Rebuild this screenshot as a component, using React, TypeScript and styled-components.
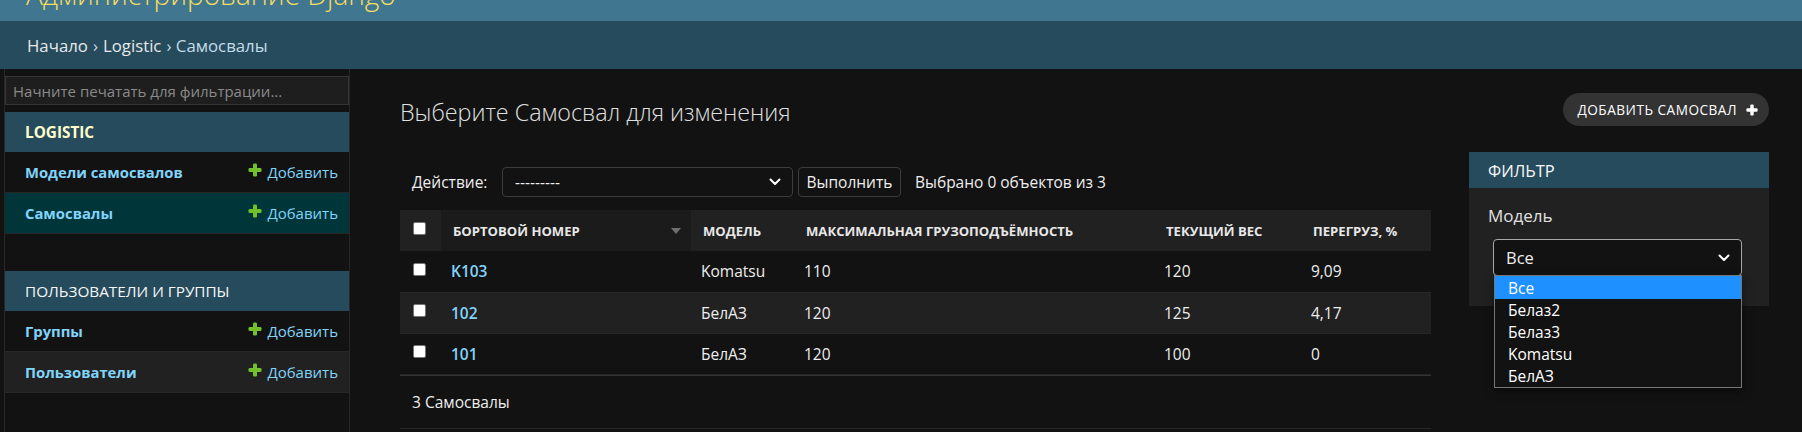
import styled, { createGlobalStyle } from 'styled-components';

const GlobalStyle = createGlobalStyle`
  html, body {
    margin: 0;
    padding: 0;
    background: #121212;
  }
  body {
    font-family: 'Open Sans', 'Noto Sans', sans-serif;
    color: #eeeeee;
  }
  * {
    box-sizing: border-box;
  }
`;

const Page = styled.div`
  width: 1802px;
  height: 432px;
  overflow: hidden;
  display: flex;
  flex-direction: column;
  background: #121212;
`;

/* header is scrolled, only the lower strip is visible */
const Branding = styled.header`
  flex: none;
  height: 21px;
  padding-left: 26px;
  background: #417690;
  overflow: hidden;
`;

const BrandTitle = styled.h1`
  margin: -24px 0 0;
  font-size: 28px;
  font-weight: 300;
  line-height: 36px;
  color: #f5dd5d;
  white-space: nowrap;
`;

const Breadcrumbs = styled.nav`
  flex: none;
  height: 48px;
  padding-left: 27px;
  display: flex;
  align-items: center;
  gap: 5px;
  background: #264b5d;
  font-size: 16.8px;
  color: #c4dce8;
`;

const Crumb = styled.a`
  color: #e8e8e8;
  text-decoration: none;
`;

const Main = styled.div`
  flex: 1;
  display: flex;
  min-height: 0;
`;

const ToggleStrip = styled.div`
  flex: none;
  width: 5px;
  border-right: 1px solid #272727;
`;

const Sidebar = styled.aside`
  flex: none;
  width: 345px;
  padding-top: 7px;
  border-right: 1px solid #272727;
`;

const NavFilter = styled.input`
  display: block;
  width: 344px;
  height: 29px;
  margin: 0 0 7px;
  padding: 0 7px;
  border: 1px solid #353535;
  background: #1e1e1e;
  color: #eee;
  font-family: inherit;
  font-size: 15px;

  &::placeholder {
    color: #8a8a8a;
  }
`;

const Module = styled.div`
  margin-bottom: 37px;
`;

const Caption = styled.div<{ $current?: boolean }>`
  height: 40px;
  padding-left: 20px;
  display: flex;
  align-items: center;
  background: #264b5d;
  font-size: 15.3px;
  font-weight: ${(p) => (p.$current ? 700 : 400)};
  color: ${(p) => (p.$current ? '#ffffcc' : '#f7f7f7')};
  text-transform: uppercase;
`;

const NavRow = styled.div<{ $bg?: string }>`
  height: 41px;
  padding: 0 11px 0 20px;
  display: flex;
  align-items: center;
  justify-content: space-between;
  border-bottom: 1px solid #272727;
  background: ${(p) => p.$bg || '#121212'};
`;

const NavLink = styled.a`
  color: #81d4fa;
  font-weight: 700;
  font-size: 14.8px;
  text-decoration: none;
`;

const AddLink = styled.a`
  display: flex;
  align-items: center;
  gap: 5px;
  color: #81d4fa;
  font-size: 15px;
  text-decoration: none;

  svg {
    margin-bottom: 5px;
  }
`;

const Content = styled.main`
  flex: 1;
  padding: 24px 33px 0 50px;
`;

const TitleRow = styled.div`
  display: flex;
  justify-content: space-between;
  align-items: flex-start;
`;

const Title = styled.h1`
  margin: 3px 0 0;
  font-size: 23.3px;
  font-weight: 300;
  line-height: 33px;
  color: #e0e0e0;
`;

const ObjectTool = styled.a`
  height: 33px;
  padding: 0 11px 0 15px;
  display: flex;
  align-items: center;
  gap: 9px;
  border-radius: 17px;
  background: #333333;
  color: #ffffff;
  font-size: 13.6px;
  letter-spacing: 0.5px;
  text-transform: uppercase;
  text-decoration: none;
`;

const Changelist = styled.div`
  margin-top: 23px;
  display: flex;
  align-items: flex-start;
  gap: 38px;
`;

const ListColumn = styled.div`
  flex: 1;
`;

const Actions = styled.div`
  margin-top: 15px;
  height: 30px;
  padding-left: 12px;
  display: flex;
  align-items: center;
  font-size: 15.5px;
  color: #eeeeee;
`;

const ActionLabel = styled.span`
  width: 90px;
`;

const SelectBox = styled.div<{ $width: number; $height: number; $border: string }>`
  position: relative;
  width: ${(p) => p.$width}px;
  height: ${(p) => p.$height}px;
  padding: 0 11px 0 12px;
  display: flex;
  align-items: center;
  justify-content: space-between;
  border: 1px solid ${(p) => p.$border};
  border-radius: 4px;
  background: #121212;
  color: #eeeeee;
`;

const GoButton = styled.button`
  height: 30px;
  width: 103px;
  margin-left: 5px;
  padding: 0;
  border: 1px solid #3c3c3c;
  border-radius: 4px;
  background: #121212;
  color: #eeeeee;
  font-family: inherit;
  font-size: 15.5px;
`;

const Counter = styled.span`
  margin-left: 14px;
`;

const Table = styled.table`
  width: 100%;
  margin-top: 13px;
  border-collapse: collapse;
  table-layout: fixed;
`;

const HeadCell = styled.th<{ $width: number; $sorted?: boolean }>`
  width: ${(p) => p.$width}px;
  height: 41px;
  padding: 0 0 0 12px;
  background: ${(p) => (p.$sorted ? '#1b1b1b' : '#212121')};
  text-align: left;
  font-size: 13.1px;
  font-weight: 700;
  color: #e8e8e8;
  text-transform: uppercase;
  white-space: nowrap;
`;

const SortInner = styled.div`
  display: flex;
  align-items: center;
  justify-content: space-between;
  padding-right: 10px;
`;

const CheckCell = styled.td`
  width: 41px;
  padding: 0 0 0 13px;
`;

const Check = styled.span`
  display: block;
  width: 13px;
  height: 13px;
  margin-bottom: 4px;
  border: 1px solid #767676;
  border-radius: 2px;
  background: #ffffff;
`;

const HeadCheckCell = styled.th`
  width: 41px;
  padding: 0 0 0 13px;
  background: #212121;
`;

const Row = styled.tr<{ $even?: boolean }>`
  height: 41px;
  background: ${(p) => (p.$even ? '#212121' : '#121212')};
  border-bottom: 1px solid #272727;
`;

const Cell = styled.td`
  padding: 0 0 0 10px;
  font-size: 15.5px;
  color: #eeeeee;
`;

const RowLink = styled.a`
  color: #81d4fa;
  font-weight: 600;
  text-decoration: none;
`;

const Paginator = styled.div`
  height: 54px;
  padding-left: 12px;
  display: flex;
  align-items: center;
  border-top: 1px solid #333333;
  border-bottom: 1px solid #272727;
  font-size: 15.5px;
  color: #eeeeee;
`;

const FilterPanel = styled.div`
  flex: none;
  width: 300px;
  background: #212121;
`;

const FilterCaption = styled.h2`
  margin: 0;
  height: 36px;
  padding-left: 19px;
  display: flex;
  align-items: center;
  background: #264b5d;
  font-size: 16.5px;
  font-weight: 400;
  color: #f7f7f7;
`;

const FilterBody = styled.div`
  height: 118px;
  padding: 16px 0 0 19px;
`;

const FilterLabel = styled.h3`
  margin: 0 0 11px;
  font-size: 17px;
  font-weight: 400;
  line-height: 24px;
  color: #e0e0e0;
`;

const FilterSelect = styled.div`
  margin-left: 5px;
  font-size: 16.5px;
`;

const Dropdown = styled.ul`
  position: absolute;
  top: 100%;
  left: 0;
  width: 248px;
  margin: 0;
  padding: 0;
  list-style: none;
  border: 1px solid #767676;
  background: #121212;
  box-shadow: 0 3px 8px rgba(0, 0, 0, 0.5);
  z-index: 2;
`;

const Option = styled.li<{ $active?: boolean }>`
  height: ${(p) => (p.$active ? 23 : 22)}px;
  padding-left: 13px;
  display: flex;
  align-items: center;
  background: ${(p) => (p.$active ? '#1e90ff' : 'transparent')};
  color: #ffffff;
  font-size: 15.5px;
`;

function PlusIcon({ color, size }: { color: string; size: number }) {
  return (
    <svg width={size} height={size} viewBox="0 0 14 14">
      <rect x="5" y="0.5" width="4" height="13" rx="1.2" fill={color} />
      <rect x="0.5" y="5" width="13" height="4" rx="1.2" fill={color} />
    </svg>
  );
}

function Chevron() {
  return (
    <svg width="12" height="8" viewBox="0 0 12 8">
      <path d="M1.5 1.5 L6 6 L10.5 1.5" stroke="#ffffff" strokeWidth="2" fill="none" strokeLinecap="round" strokeLinejoin="round" />
    </svg>
  );
}

function SortArrow() {
  return (
    <svg width="10" height="6" viewBox="0 0 10 6">
      <path d="M0 0 L10 0 L5 6 Z" fill="#6f6f6f" />
    </svg>
  );
}

const sections = [
  {
    name: 'Logistic',
    current: true,
    models: [
      { name: 'Модели самосвалов' },
      { name: 'Самосвалы', bg: '#00363a' },
    ],
  },
  {
    name: 'Пользователи и группы',
    current: false,
    models: [
      { name: 'Группы' },
      { name: 'Пользователи', bg: '#212121' },
    ],
  },
];

const trucks = [
  { id: 'K103', model: 'Komatsu', max: 110, weight: 120, over: '9,09' },
  { id: '102', model: 'БелАЗ', max: 120, weight: 125, over: '4,17' },
  { id: '101', model: 'БелАЗ', max: 120, weight: 100, over: '0' },
];

const modelOptions = ['Все', 'Белаз2', 'Белаз3', 'Komatsu', 'БелАЗ'];

export default function App() {
  return (
    <Page>
      <GlobalStyle />
      <Branding>
        <BrandTitle>Администрирование Django</BrandTitle>
      </Branding>
      <Breadcrumbs>
        <Crumb href="#">Начало</Crumb>›<Crumb href="#">Logistic</Crumb>› Самосвалы
      </Breadcrumbs>
      <Main>
        <ToggleStrip />
        <Sidebar>
          <NavFilter placeholder="Начните печатать для фильтрации..." />
          {sections.map((section) => (
            <Module key={section.name}>
              <Caption $current={section.current}>{section.name}</Caption>
              {section.models.map((m) => (
                <NavRow key={m.name} $bg={m.bg}>
                  <NavLink href="#">{m.name}</NavLink>
                  <AddLink href="#">
                    <PlusIcon color="#70bf2b" size={14} />
                    Добавить
                  </AddLink>
                </NavRow>
              ))}
            </Module>
          ))}
        </Sidebar>
        <Content>
          <TitleRow>
            <Title>Выберите Самосвал для изменения</Title>
            <ObjectTool href="#">
              Добавить Самосвал
              <PlusIcon color="#ffffff" size={12} />
            </ObjectTool>
          </TitleRow>
          <Changelist>
            <ListColumn>
              <Actions>
                <ActionLabel>Действие:</ActionLabel>
                <SelectBox $width={291} $height={30} $border="#3c3c3c">
                  <span>---------</span>
                  <Chevron />
                </SelectBox>
                <GoButton>Выполнить</GoButton>
                <Counter>Выбрано 0 объектов из 3</Counter>
              </Actions>
              <Table>
                <thead>
                  <tr>
                    <HeadCheckCell>
                      <Check />
                    </HeadCheckCell>
                    <HeadCell $width={250} $sorted>
                      <SortInner>
                        Бортовой номер
                        <SortArrow />
                      </SortInner>
                    </HeadCell>
                    <HeadCell $width={103}>Модель</HeadCell>
                    <HeadCell $width={360}>Максимальная грузоподъёмность</HeadCell>
                    <HeadCell $width={147}>Текущий вес</HeadCell>
                    <HeadCell $width={130}>Перегруз, %</HeadCell>
                  </tr>
                </thead>
                <tbody>
                  {trucks.map((t, i) => (
                    <Row key={t.id} $even={i % 2 === 1}>
                      <CheckCell>
                        <Check />
                      </CheckCell>
                      <Cell>
                        <RowLink href="#">{t.id}</RowLink>
                      </Cell>
                      <Cell>{t.model}</Cell>
                      <Cell>{t.max}</Cell>
                      <Cell>{t.weight}</Cell>
                      <Cell>{t.over}</Cell>
                    </Row>
                  ))}
                </tbody>
              </Table>
              <Paginator>3 Самосвалы</Paginator>
            </ListColumn>
            <FilterPanel>
              <FilterCaption>ФИЛЬТР</FilterCaption>
              <FilterBody>
                <FilterLabel>Модель</FilterLabel>
                <FilterSelect>
                  <SelectBox $width={249} $height={37} $border="#a8a8a8">
                    <span>Все</span>
                    <Chevron />
                    <Dropdown>
                      {modelOptions.map((o, i) => (
                        <Option key={o} $active={i === 0}>
                          {o}
                        </Option>
                      ))}
                    </Dropdown>
                  </SelectBox>
                </FilterSelect>
              </FilterBody>
            </FilterPanel>
          </Changelist>
        </Content>
      </Main>
    </Page>
  );
}
